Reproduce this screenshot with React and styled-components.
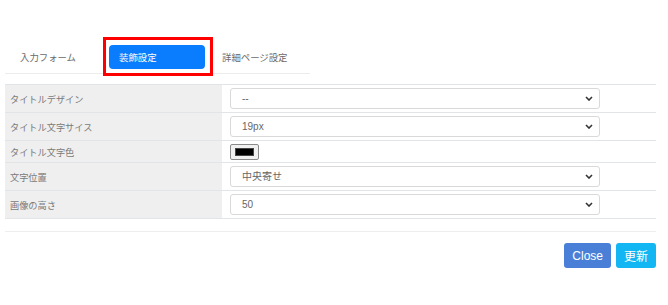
import React from "react";
import styled, { createGlobalStyle } from "styled-components";

const Global = createGlobalStyle`
  html, body {
    margin: 0;
    background: #fff;
    font-family: "Noto Sans CJK JP", "Liberation Sans", sans-serif;
  }
`;

const rows = [
  { label: "タイトルデザイン", type: "select", value: "--" },
  { label: "タイトル文字サイス", type: "select", value: "19px" },
  { label: "タイトル文字色", type: "color", value: "#000000" },
  { label: "文字位置", type: "select", value: "中央寄せ" },
  { label: "画像の高さ", type: "select", value: "50" },
];

const Chevron = () => (
  <svg width="8" height="5" viewBox="0 0 8 5">
    <path d="M1 1 L4 4 L7 1" fill="none" stroke="#333" strokeWidth="1.6" />
  </svg>
);

const App = () => {
  return (
    <>
      <Global />
      <Page>
        <Nav>
          <Tab>入力フォーム</Tab>
          <Highlight>
            <ActiveTab>装飾設定</ActiveTab>
          </Highlight>
          <Tab indent={9}>詳細ページ設定</Tab>
        </Nav>

        <Table>
          {rows.map((r) => (
            <Row key={r.label} short={r.type === "color"}>
              <Label>{r.label}</Label>
              <Value>
                {r.type === "select" ? (
                  <SelectWrap>
                    <Select defaultValue={r.value}>
                      <option>{r.value}</option>
                    </Select>
                    <Arrow>
                      <Chevron />
                    </Arrow>
                  </SelectWrap>
                ) : (
                  <Swatch>
                    <SwatchFill style={{ background: r.value }} />
                  </Swatch>
                )}
              </Value>
            </Row>
          ))}
        </Table>

        <Footer>
          <Button color="#4a7fd8">Close</Button>
          <Button color="#12b6f3">更新</Button>
        </Footer>
      </Page>
    </>
  );
};

export default App;

const Page = styled.div`
  width: 668px;
  height: 305px;
  box-sizing: border-box;
  padding: 37px 12px 0 5px;
`;

const Nav = styled.div`
  display: flex;
  align-items: flex-start;
  width: 305px;
  height: 36px;
  border-bottom: 1px solid #ececec;
`;

const Tab = styled.div`
  height: 39px;
  display: flex;
  align-items: center;
  padding-left: ${(p) => (p.indent != null ? p.indent : 15)}px;
  width: ${(p) => (p.indent != null ? "auto" : "83px")};
  font-size: 9.4px;
  color: #6a6a6a;
  white-space: nowrap;
`;

const Highlight = styled.div`
  box-sizing: border-box;
  height: 39px;
  width: 110px;
  border: 3px solid #f00;
  padding: 5px 5px 4px 3px;
  position: relative;
  z-index: 1;
`;

const ActiveTab = styled.div`
  height: 24px;
  border-radius: 4px;
  background: #0a7dfe;
  color: #fff;
  font-size: 9.4px;
  display: flex;
  align-items: center;
  padding-left: 10px;
`;

const Table = styled.div`
  margin-top: 10px;
  border-top: 1px solid #e2e5e8;
  border-bottom: 1px solid #e2e5e8;
`;

const Row = styled.div`
  display: grid;
  grid-template-columns: 217px 1fr;
  height: ${(p) => (p.short ? 21 : 27)}px;
  & + & {
    border-top: 1px solid #e2e5e8;
  }
`;

const Label = styled.div`
  background: #efefef;
  color: #7a7a7a;
  font-size: 9.2px;
  display: flex;
  align-items: center;
  padding-left: 5px;
  white-space: nowrap;
`;

const Value = styled.div`
  display: flex;
  align-items: center;
  padding-left: 8px;
`;

const SelectWrap = styled.div`
  position: relative;
  width: 370px;
  height: 21px;
`;

const Select = styled.select`
  display: block;
  appearance: none;
  width: 100%;
  height: 100%;
  margin: 0;
  box-sizing: border-box;
  border: 1px solid #d9d9d9;
  border-radius: 3px;
  background: #fff;
  color: #666;
  font-family: "Liberation Sans", "Noto Sans CJK JP", sans-serif;
  font-size: 10px;
  padding: 0 11px;
  outline: none;
`;

const Arrow = styled.span`
  position: absolute;
  right: 7px;
  top: 8px;
  display: flex;
  pointer-events: none;
`;

const Swatch = styled.div`
  box-sizing: border-box;
  width: 29px;
  height: 16px;
  border: 1px solid #8a8a8a;
  border-radius: 2px;
  background: #f0f0f0;
  padding: 3px 4px;
  display: flex;
`;

const SwatchFill = styled.div`
  flex: 1;
  border: 1px solid #444;
`;

const Footer = styled.div`
  margin-top: 12px;
  border-top: 1px solid #eeeeee;
  display: flex;
  justify-content: flex-end;
  gap: 5px;
  padding-top: 11px;
`;

const Button = styled.button`
  height: 25px;
  padding: 0 8px;
  border: none;
  border-radius: 3px;
  background: ${(p) => p.color};
  color: #fff;
  font-family: "Liberation Sans", "Noto Sans CJK JP", sans-serif;
  font-size: 12px;
  cursor: pointer;
`;
